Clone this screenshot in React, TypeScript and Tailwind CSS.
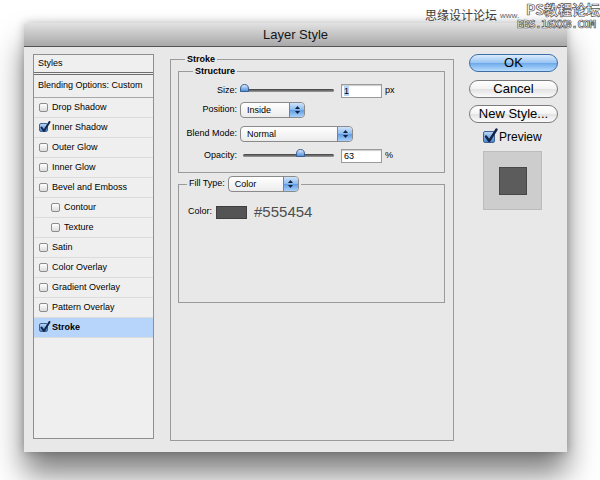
import React from "react";

function CheckBox({ checked, big }: { checked?: boolean; big?: boolean }) {
  const size = big ? "w-[12px] h-[12px]" : "w-[9px] h-[9px]";
  const skin = checked
    ? "border-[#3d6394] bg-linear-to-b from-[#b9d5f6] to-[#4d87cf]"
    : "border-[#8c8c8c] bg-linear-to-b from-white to-[#dcdcdc]";
  return (
    <span className={`relative inline-block shrink-0 rounded-[2px] border ${size} ${skin}`}>
      {checked && !big && (
        <svg className="absolute left-[0px] top-[-3px]" width="11" height="12" viewBox="0 0 11 12">
          <path d="M1.5 6.5 L4 10 L9.5 1" fill="none" stroke="#14254a" strokeWidth="2" strokeLinecap="round" strokeLinejoin="round" />
        </svg>
      )}
      {checked && big && (
        <svg className="absolute left-[0px] top-[-4px]" width="14" height="16" viewBox="0 0 14 16">
          <path d="M2 8.5 L5.2 13 L12.5 1.5" fill="none" stroke="#14254a" strokeWidth="2.4" strokeLinecap="round" strokeLinejoin="round" />
        </svg>
      )}
    </span>
  );
}

function Stepper() {
  return (
    <span className="flex h-full w-[15px] flex-col items-center justify-center gap-[2px] rounded-r-[3px] border-l border-[#5d87bb] bg-[linear-gradient(#cfe3fa,#8ab9ee_50%,#5f9be3_51%,#a9d1fa)]">
      <svg width="5" height="3" viewBox="0 0 5 3">
        <path d="M0 3 L2.5 0 L5 3 Z" fill="#10213f" />
      </svg>
      <svg width="5" height="3" viewBox="0 0 5 3">
        <path d="M0 0 L2.5 3 L5 0 Z" fill="#10213f" />
      </svg>
    </span>
  );
}

function Select({ label, className }: { label: string; className: string }) {
  return (
    <div
      className={`flex h-[16px] items-center overflow-hidden rounded-[4px] border border-[#8a8a8a] bg-linear-to-b from-white to-[#ececec] ${className}`}
    >
      <span className="flex-1 pl-[6px] text-[9px] leading-[14px] text-black">{label}</span>
      <Stepper />
    </div>
  );
}

function Slider({ className, thumb }: { className: string; thumb: string }) {
  return (
    <div className={`relative h-[15px] ${className}`}>
      <div className="mt-[6px] h-[3px] rounded-full bg-linear-to-b from-[#3e3e3e] to-[#a0a0a0]" />
      <svg className={`absolute top-[1px] ${thumb}`} width="9" height="8" viewBox="0 0 9 8">
        <defs>
          <linearGradient id="tg" x1="0" y1="0" x2="0" y2="1">
            <stop offset="0" stopColor="#e3f0ff" />
            <stop offset="1" stopColor="#4b88d4" />
          </linearGradient>
        </defs>
        <path d="M0.5 7.5 L0.5 5 Q0.5 0.5 4.5 0.5 Q8.5 0.5 8.5 5 L8.5 7.5 Z" fill="url(#tg)" stroke="#3a5f92" strokeWidth="1" />
      </svg>
    </div>
  );
}

function Input({ children }: { children: React.ReactNode }) {
  return (
    <div className="h-[14px] w-[41px] border border-[#9a9a9a] bg-white pl-[2px] text-[9px] leading-[12px] shadow-[inset_0_1px_1px_rgba(0,0,0,0.2)]">
      {children}
    </div>
  );
}

function Button({ children, primary }: { children: React.ReactNode; primary?: boolean }) {
  const skin = primary
    ? "border-[#3f6ea6] bg-[linear-gradient(#dcecfd,#97c3f2_50%,#6da8ea_51%,#b7ddfd)]"
    : "border-[#7b7b7b] bg-[linear-gradient(#ffffff,#f3f3f3_50%,#e2e2e2_51%,#fbfbfb)]";
  return (
    <div
      className={`flex h-[18px] w-[89px] items-center justify-center rounded-full border text-[13px] leading-[16px] text-black ${skin}`}
    >
      {children}
    </div>
  );
}

const rows: { t: string; c?: boolean; i?: boolean; s?: boolean }[] = [
  { t: "Drop Shadow" },
  { t: "Inner Shadow", c: true },
  { t: "Outer Glow" },
  { t: "Inner Glow" },
  { t: "Bevel and Emboss" },
  { t: "Contour", i: true },
  { t: "Texture", i: true },
  { t: "Satin" },
  { t: "Color Overlay" },
  { t: "Gradient Overlay" },
  { t: "Pattern Overlay" },
  { t: "Stroke", c: true, s: true },
];

export default function App() {
  return (
    <div className="relative h-[480px] w-[600px] overflow-hidden bg-white font-['Liberation_Sans',Arial,sans-serif] text-black">
      {/* watermark */}
      <div className="absolute left-[425px] top-[7px] z-10 font-['Noto_Sans_CJK_SC',sans-serif] text-[12px] leading-[16px] text-[#3a3a3a]">
        思缘设计论坛
      </div>
      <div className="absolute left-[500px] top-[11px] z-10 text-[8px] leading-[10px] text-[#666]">www.</div>
      <div className="absolute left-[526px] top-[0px] z-10 font-['Noto_Sans_CJK_SC',sans-serif] text-[14px] font-bold leading-[18px] text-white [-webkit-text-stroke:0.7px_#555]">
        PS教程论坛
      </div>
      <div className="absolute left-[517px] top-[18px] z-10 font-['DejaVu_Sans_Mono',monospace] text-[11px] font-bold leading-[13px] tracking-[-0.6px] text-white [-webkit-text-stroke:0.7px_#555]">
        BBS.16XX8.COM
      </div>

      <div className="pl-[24px] pt-[23px]">
        <div className="flex h-[429px] w-[543px] flex-col rounded-t-[4px] bg-[#e8e8e8] shadow-[0_22px_30px_rgba(0,0,0,0.5),0_0_10px_rgba(0,0,0,0.25)]">
          {/* title bar */}
          <div className="flex h-[24px] items-center justify-center rounded-t-[4px] border-b border-[#555] bg-linear-to-b from-[#e2e2e2] to-[#a8a8a8] text-[13px] text-[#151515]">
            Layer Style
          </div>

          <div className="flex pl-[9px] pt-[7px]">
            {/* left styles list */}
            <div className="flex h-[385px] w-[121px] flex-col border border-[#8f8f8f] bg-[#efefef] text-[9px]">
              <div className="flex h-[17px] items-center pl-[4px]">Styles</div>
              <div className="h-[3px] border-y border-[#6f6f6f]" />
              <div className="flex h-[23px] items-center border-b border-[#a8a8a8] pl-[4px]">Blending Options: Custom</div>
              {rows.map((r) => (
                <div
                  key={r.t}
                  className={`flex h-[20px] items-center gap-[4px] border-b border-[#dcdcdc] ${r.i ? "pl-[17px]" : "pl-[5px]"} ${
                    r.s ? "bg-[#b7d5fb] font-bold" : ""
                  }`}
                >
                  <CheckBox checked={r.c} />
                  <span>{r.t}</span>
                </div>
              ))}
            </div>

            {/* middle stroke panel */}
            <fieldset className="ml-[16px] h-[387px] w-[284px] border border-[#9a9a9a] p-0">
              <legend className="ml-[14px] px-[2px] text-[9px] font-bold leading-[11px]">Stroke</legend>
              <div className="pl-[7px] pt-[1px]">
                <fieldset className="w-[267px] border border-[#9a9a9a] p-0">
                  <legend className="ml-[14px] px-[2px] text-[9px] font-bold leading-[11px]">Structure</legend>
                  <div className="pb-[9px] pl-[6px] pt-[6px] text-[9px]">
                    <div className="flex h-[15px] items-center">
                      <span className="w-[52px] text-right">Size:</span>
                      <Slider className="ml-[3px] w-[94px]" thumb="left-[0px]" />
                      <div className="ml-[7px]">
                        <Input>
                          <span className="bg-[#b5d5fd]">1</span>
                        </Input>
                      </div>
                      <span className="ml-[3px]">px</span>
                    </div>
                    <div className="mt-[4px] flex h-[16px] items-center">
                      <span className="w-[52px] text-right">Position:</span>
                      <Select label="Inside" className="ml-[3px] w-[65px]" />
                    </div>
                    <div className="mt-[8px] flex h-[16px] items-center">
                      <span className="w-[52px] text-right">Blend Mode:</span>
                      <Select label="Normal" className="ml-[3px] w-[113px]" />
                    </div>
                    <div className="mt-[6px] flex h-[15px] items-center">
                      <span className="w-[52px] text-right">Opacity:</span>
                      <Slider className="ml-[6px] w-[91px]" thumb="left-[53px]" />
                      <div className="ml-[7px]">
                        <Input>63</Input>
                      </div>
                      <span className="ml-[3px]">%</span>
                    </div>
                  </div>
                </fieldset>

                <fieldset className="mt-[3px] h-[127px] w-[267px] border border-[#9a9a9a] p-0">
                  <legend className="ml-[8px] px-[2px] text-[9px]">
                    <div className="flex items-center">
                      <span>Fill Type:</span>
                      <Select label="Color" className="ml-[3px] w-[71px]" />
                    </div>
                  </legend>
                  <div className="mt-[13px] flex h-[14px] items-center pl-[9px] text-[9px]">
                    <span>Color:</span>
                    <span className="ml-[4px] h-[13px] w-[31px] border border-[#3f3f3f] bg-[#555454]" />
                    <span className="ml-[7px] text-[15px] leading-[14px] text-[#4e4e4e]">#555454</span>
                  </div>
                </fieldset>
              </div>
            </fieldset>

            {/* right buttons */}
            <div className="ml-[15px] flex w-[89px] flex-col">
              <Button primary>OK</Button>
              <div className="mt-[8px]">
                <Button>Cancel</Button>
              </div>
              <div className="mt-[7px]">
                <Button>New Style...</Button>
              </div>
              <div className="mt-[7px] flex h-[13px] items-center pl-[14px]">
                <CheckBox checked big />
                <span className="ml-[4px] text-[12px]">Preview</span>
              </div>
              <div className="ml-[14px] mt-[8px] flex h-[59px] w-[59px] items-center justify-center border border-[#bcbcbc] bg-[#cdcdcd]">
                <div className="h-[28px] w-[28px] border border-[#474747] bg-[#5c5c5c]" />
              </div>
            </div>
          </div>
        </div>
      </div>
    </div>
  );
}
